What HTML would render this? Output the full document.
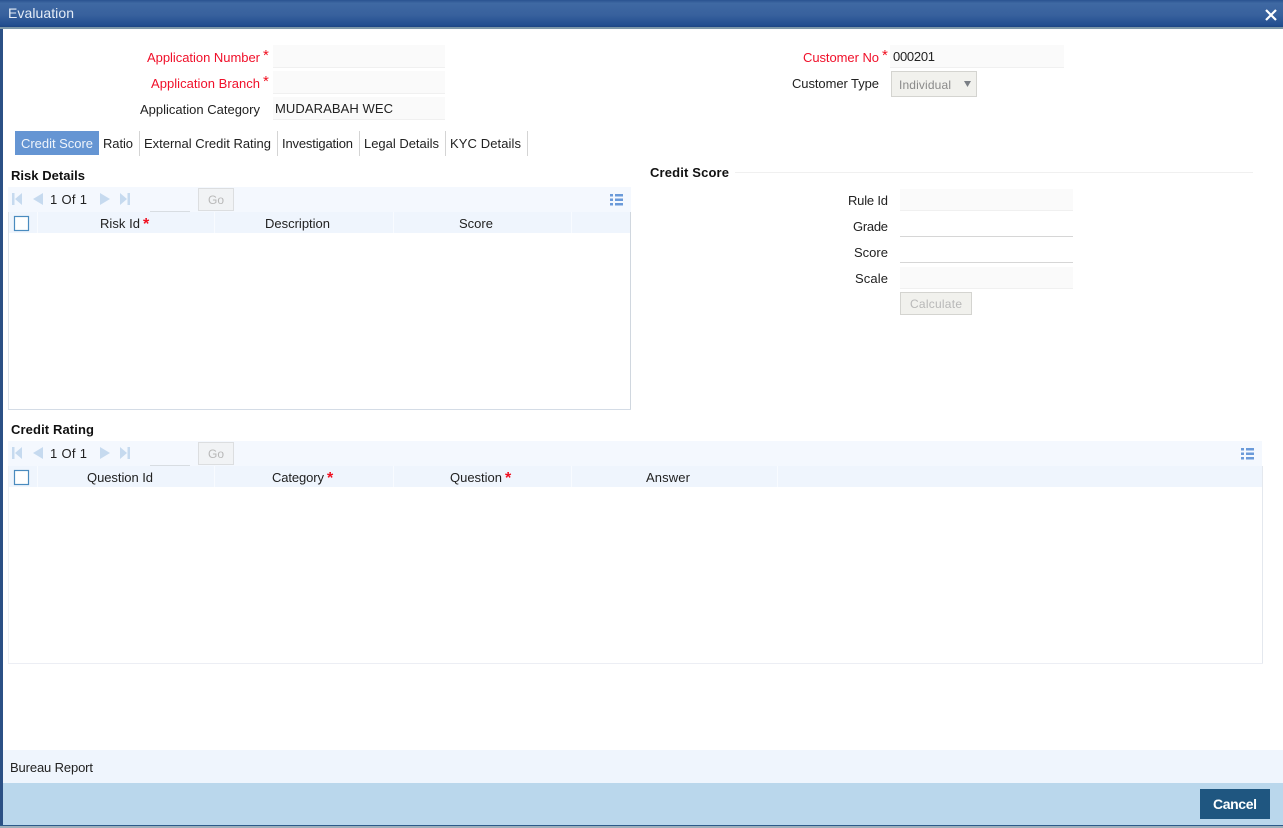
<!DOCTYPE html>
<html lang="en"><head><meta charset="utf-8"><title>Evaluation</title>
<style>
html,body{margin:0;padding:0;background:#fff;width:1283px;height:828px;overflow:hidden}
svg{display:block}
text{font-family:"Liberation Sans",Arial,sans-serif;font-size:13px;fill:#222}
.r{fill:#f0102a}
.b{font-weight:bold;fill:#111}
.g{fill:#b8b8b8;font-size:12px}
.ic{fill:#c6daef}
.li{fill:#6a9ad9}
.st{fill:#f01020;font-size:15px}
.ts{fill:#f01020;font-size:16px;font-weight:bold}
</style></head><body>
<svg width="1283" height="828" viewBox="0 0 1283 828" xmlns="http://www.w3.org/2000/svg">
<defs><linearGradient id="tb" x1="0" y1="0" x2="0" y2="1">
<stop offset="0" stop-color="#2a5390"/><stop offset=".12" stop-color="#3f69a3"/><stop offset=".55" stop-color="#38619d"/><stop offset=".92" stop-color="#234f90"/><stop offset="1" stop-color="#1d4584"/></linearGradient></defs>
<rect width="1283" height="828" fill="#fff"/>
<rect x="0" y="0" width="3" height="828" fill="#2b5085"/>
<rect x="0" y="0" width="1283" height="27" fill="url(#tb)"/>
<rect x="0" y="27" width="1283" height="2" fill="#7d98a8"/>
<text x="8" y="18" style="font-size:14px;fill:#e4ecf6" textLength="66">Evaluation</text>
<path d="M1266 10L1276 20M1276 10L1266 20" stroke="#fff" stroke-width="2.2" fill="none"/>

<!-- top form -->
<rect x="273" y="45" width="172" height="22" fill="#fafafa"/><rect x="273" y="67" width="172" height="1" fill="#f0f0f0"/>
<rect x="273" y="71" width="172" height="22" fill="#fafafa"/><rect x="273" y="93" width="172" height="1" fill="#f0f0f0"/>
<rect x="273" y="97" width="172" height="22" fill="#fafafa"/><rect x="273" y="119" width="172" height="1" fill="#f0f0f0"/>
<text class="r" x="147" y="62" textLength="113">Application Number</text><text class="st" x="263" y="60">*</text>
<text class="r" x="151" y="88" textLength="109">Application Branch</text><text class="st" x="263" y="86">*</text>
<text x="140" y="114" textLength="120">Application Category</text>
<text x="275" y="113" textLength="118">MUDARABAH WEC</text>

<rect x="890" y="45" width="174" height="22" fill="#fafafa"/><rect x="890" y="67" width="174" height="1" fill="#f0f0f0"/>
<text class="r" x="803" y="62" textLength="76">Customer No</text><text class="st" x="882" y="60">*</text>
<text x="893" y="61" textLength="42">000201</text>
<text x="792" y="88" textLength="87">Customer Type</text>
<rect x="891.500" y="71.500" width="85" height="25" fill="#f1f1ed" stroke="#d4d4d0"/>
<text x="899" y="89" style="fill:#8a8a8a;font-size:12px" textLength="52">Individual</text>
<path d="M964 81h7l-3.500 6z" fill="#7a7f85"/>

<!-- tabs -->
<rect x="15" y="131" width="84" height="24" fill="#6595d3"/>
<text x="21" y="148" style="fill:#eef4fb" textLength="72">Credit Score</text>
<text x="103" y="148" textLength="30">Ratio</text>
<text x="144" y="148" textLength="127">External Credit Rating</text>
<text x="282" y="148" textLength="71">Investigation</text>
<text x="364" y="148" textLength="75">Legal Details</text>
<text x="450" y="148" textLength="71">KYC Details</text>
<rect x="139" y="131" width="1" height="25" fill="#d4d4d4"/>
<rect x="277" y="131" width="1" height="25" fill="#d4d4d4"/>
<rect x="359" y="131" width="1" height="25" fill="#d4d4d4"/>
<rect x="445" y="131" width="1" height="25" fill="#d4d4d4"/>
<rect x="527" y="131" width="1" height="25" fill="#d4d4d4"/>

<!-- risk details -->
<text class="b" x="11" y="180" textLength="74">Risk Details</text>
<rect x="8" y="187" width="623" height="25" fill="#f4f8fe"/>
<rect x="8" y="212" width="623" height="21" fill="#eff5fd"/>
<path d="M12 193h2.500v12H12zM22 193v12l-7-6zM43 193v12l-10-6zM100 193v12l10-6zM120 193v12l7-6zM127.500 193h2.500v12h-2.500z" class="ic"/>
<text x="50" y="204" textLength="37">1  Of  1</text>
<rect x="150" y="211" width="40" height="1" fill="#d8dde2"/>
<rect x="198.500" y="188.500" width="35" height="22" fill="#f1f3f5" stroke="#dcdee0"/>
<text class="g" x="208" y="204" textLength="16">Go</text>
<path d="M610 194h3v2.500h-3zM615 194h8v2.500h-8zM610 198.500h3v2.500h-3zM615 198.500h8v2.500h-8zM610 203h3v2.500h-3zM615 203h8v2.500h-8z" class="li"/>
<rect x="14.500" y="216.500" width="14" height="14" fill="#fff" stroke="#4a8bbf" stroke-width="1.200"/>
<rect x="37" y="212" width="1" height="21" fill="#f8fbff"/><rect x="214" y="212" width="1" height="21" fill="#f8fbff"/><rect x="393" y="212" width="1" height="21" fill="#f8fbff"/><rect x="571" y="212" width="1" height="21" fill="#f8fbff"/>
<text x="100" y="228" textLength="40">Risk Id</text><text class="ts" x="143" y="229">*</text>
<text x="265" y="228" textLength="65">Description</text>
<text x="459" y="228" textLength="34">Score</text>
<rect x="8" y="212" width="1" height="198" fill="#dde3ea"/>
<rect x="630" y="212" width="1" height="198" fill="#d0d7df"/>
<rect x="8" y="409" width="623" height="1" fill="#d4dce6"/>

<!-- credit score -->
<text class="b" x="650" y="177" textLength="79">Credit Score</text>
<rect x="735" y="172" width="518" height="1" fill="#f0f0f0"/>
<text x="848" y="205" textLength="40">Rule Id</text>
<text x="853" y="231" textLength="35">Grade</text>
<text x="854" y="257" textLength="34">Score</text>
<text x="855" y="283" textLength="33">Scale</text>
<rect x="900" y="189" width="173" height="21" fill="#fafafa"/><rect x="900" y="210" width="173" height="1" fill="#f0f0f0"/>
<rect x="900" y="236" width="173" height="1" fill="#d6d6d6"/>
<rect x="900" y="262" width="173" height="1" fill="#d6d6d6"/>
<rect x="900" y="267" width="173" height="21" fill="#fafafa"/><rect x="900" y="288" width="173" height="1" fill="#f0f0f0"/>
<rect x="900.500" y="292.500" width="71" height="22" fill="#f1f1ed" stroke="#d4d4d0"/>
<text class="g" x="910" y="308" textLength="52">Calculate</text>

<!-- credit rating -->
<text class="b" x="11" y="434" textLength="83">Credit Rating</text>
<rect x="8" y="441" width="1254" height="25" fill="#f4f8fe"/>
<rect x="8" y="466" width="1254" height="21" fill="#eff5fd"/>
<path d="M12 447h2.500v12H12zM22 447v12l-7-6zM43 447v12l-10-6zM100 447v12l10-6zM120 447v12l7-6zM127.500 447h2.500v12h-2.500z" class="ic"/>
<text x="50" y="458" textLength="37">1  Of  1</text>
<rect x="150" y="465" width="40" height="1" fill="#d8dde2"/>
<rect x="198.500" y="442.500" width="35" height="22" fill="#f1f3f5" stroke="#dcdee0"/>
<text class="g" x="208" y="458" textLength="16">Go</text>
<path d="M1241 448h3v2.500h-3zM1246 448h8v2.500h-8zM1241 452.500h3v2.500h-3zM1246 452.500h8v2.500h-8zM1241 457h3v2.500h-3zM1246 457h8v2.500h-8z" class="li"/>
<rect x="14.500" y="470.500" width="14" height="14" fill="#fff" stroke="#4a8bbf" stroke-width="1.200"/>
<rect x="37" y="466" width="1" height="21" fill="#f8fbff"/><rect x="214" y="466" width="1" height="21" fill="#f8fbff"/><rect x="393" y="466" width="1" height="21" fill="#f8fbff"/><rect x="571" y="466" width="1" height="21" fill="#f8fbff"/><rect x="777" y="466" width="1" height="21" fill="#f8fbff"/>
<text x="87" y="482" textLength="66">Question Id</text>
<text x="272" y="482" textLength="52">Category</text><text class="ts" x="327" y="483">*</text>
<text x="450" y="482" textLength="52">Question</text><text class="ts" x="505" y="483">*</text>
<text x="646" y="482" textLength="44">Answer</text>
<rect x="8" y="466" width="1" height="198" fill="#eef1f5"/>
<rect x="1262" y="466" width="1" height="198" fill="#e4e8ee"/>
<rect x="8" y="663" width="1255" height="1" fill="#eceef4"/>

<!-- bottom -->
<rect x="3" y="750" width="1280" height="33" fill="#eff5fd"/>
<text x="10" y="772" textLength="83">Bureau Report</text>
<rect x="3" y="783" width="1280" height="42" fill="#bad7ec"/>
<rect x="1200" y="789" width="70" height="30" fill="#1f5680"/>
<text class="b" x="1213" y="809" style="font-size:14px;fill:#fff" textLength="44">Cancel</text>
<rect x="0" y="825" width="1283" height="1" fill="#2c5a8a"/>
<rect x="0" y="826" width="1283" height="2" fill="#9fb0bc"/>
</svg>
</body></html>
